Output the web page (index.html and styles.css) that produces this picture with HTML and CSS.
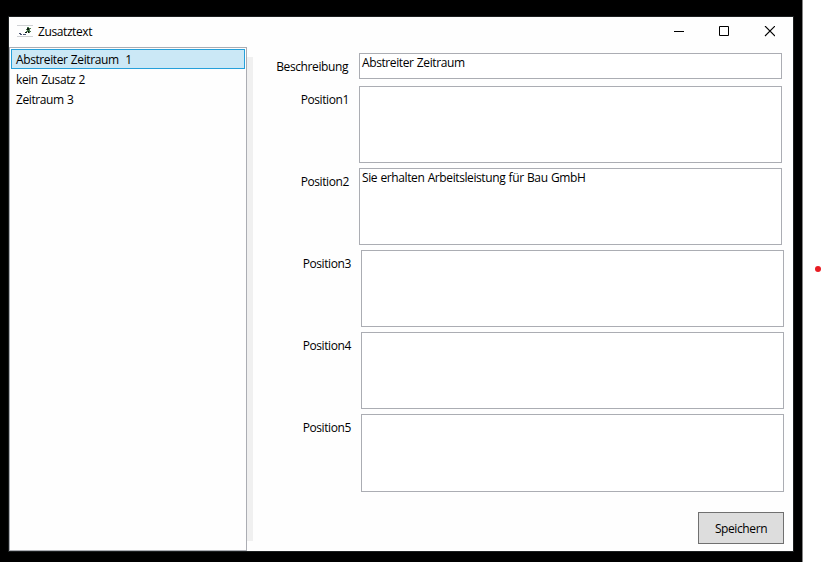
FILE: index.html
```html
<!DOCTYPE html>
<html lang="de">
<head>
<meta charset="utf-8">
<title>Zusatztext</title>
<link rel="stylesheet" href="styles.css">
</head>
<body>
<div class="desktop">
  <main class="window">
    <header class="titlebar">
      <svg class="app-icon" width="16" height="14" viewBox="0 0 16 14">
        <path d="M0 .5h16M0 11.5h16" stroke="#cfd1d4"/>
        <path d="M2 8h2v1h1v1H3V9H2zM6 9h3v1H6z" fill="#4a5470"/>
        <path d="M10 2h2v1h2v1h-1v2h1v1h-1v1h-2V7H9V6h1V5H9V4h1z" fill="#4c7a50"/>
        <path d="M10 3h2v2h-2zM8 7h2v1H8zM11 6h1v2h-1z" fill="#0c190f"/>
      </svg>
      <h1 class="title">Zusatztext</h1>
      <svg class="controls" width="101" height="11" viewBox="0 0 101 11" fill="none" stroke="#000">
        <path d="M0 5.5h10"/>
        <path d="M45.5 .5h9v9h-9z"/>
        <path d="M91 0l10 10M101 0L91 10" stroke-width="1.1"/>
      </svg>
    </header>
    <div class="content">
      <ul class="list">
        <li class="item selected">Abstreiter Zeitraum&nbsp; 1</li>
        <li class="item">kein Zusatz 2</li>
        <li class="item">Zeitraum 3</li>
      </ul>
      <div class="splitter"></div>
      <form class="form">
        <div class="row single"><label class="label">Beschreibung</label><div class="box">Abstreiter Zeitraum</div></div>
        <div class="row"><label class="label">Position1</label><div class="box"></div></div>
        <div class="row"><label class="label">Position2</label><div class="box">Sie erhalten Arbeitsleistung für Bau GmbH</div></div>
        <div class="row shifted"><label class="label">Position3</label><div class="box"></div></div>
        <div class="row shifted"><label class="label">Position4</label><div class="box"></div></div>
        <div class="row shifted last"><label class="label">Position5</label><div class="box"></div></div>
        <button class="save" type="button">Speichern</button>
      </form>
    </div>
  </main>
</div>
<aside class="margin"><span class="dot"></span></aside>
</body>
</html>
```

FILE: styles.css
```css
* { box-sizing: border-box; }
body {
  margin: 0;
  width: 821px;
  height: 562px;
  display: flex;
  overflow: hidden;
  background: #fff;
  color: #000;
  font: 12px/16px "Open Sans", "Noto Sans", sans-serif;
  letter-spacing: -0.4px;
  word-spacing: 0.6px;
}
.desktop {
  width: 803px;
  height: 562px;
  padding: 16px 0 0 8px;
  background: #000;
  border-right: 1px solid #858585;
}
.window {
  width: 786px;
  height: 536px;
  border: 1px solid #1c1f20;
  background: #fefefe;
}
.titlebar {
  height: 30px;
  display: flex;
  align-items: flex-start;
  padding: 0 18px 0 8px;
}
.app-icon { margin-top: 8px; }
.title {
  margin: 7px auto 0 5px;
  font-size: 12px;
  font-weight: 400;
}
.controls { margin-top: 9px; }
.content { height: 504px; display: flex; }
.list {
  width: 238px;
  height: 504px;
  margin: 0;
  padding: 1px;
  border: 1px solid #abadb3;
  list-style: none;
}
.item {
  height: 20px;
  padding: 2px 4px 0;
  border: 1px solid transparent;
}
.selected { background: #cbe8f6; border-color: #26a0da; }
.splitter {
  width: 6px;
  height: 484px;
  margin-top: 10px;
  background: #f0f0f0;
}
.form {
  width: 540px;
  padding-top: 6px;
  display: flex;
  flex-direction: column;
}
.row {
  height: 77px;
  margin-bottom: 5px;
  display: flex;
}
.single { height: 26px; margin-bottom: 7px; }
.label {
  width: 96px;
  margin-right: 10px;
  padding-top: 6px;
  text-align: right;
}
.single .label { width: 95px; margin-right: 11px; }
.shifted { margin-left: 2px; }
.last { height: 78px; margin-bottom: 20px; }
.box {
  width: 423px;
  padding: 1px 2px;
  border: 1px solid #abadb3;
  background: #fff;
}
.save {
  width: 86px;
  height: 32px;
  margin-left: 445px;
  padding: 2px 0 0;
  border: 1px solid #707070;
  background: #ddd;
  color: #000;
  font: inherit;
  letter-spacing: inherit;
}
.margin { width: 18px; padding: 266px 0 0 11.5px; }
.dot {
  display: block;
  width: 6px;
  height: 6px;
  border-radius: 50%;
  background: #e81c23;
}
```
